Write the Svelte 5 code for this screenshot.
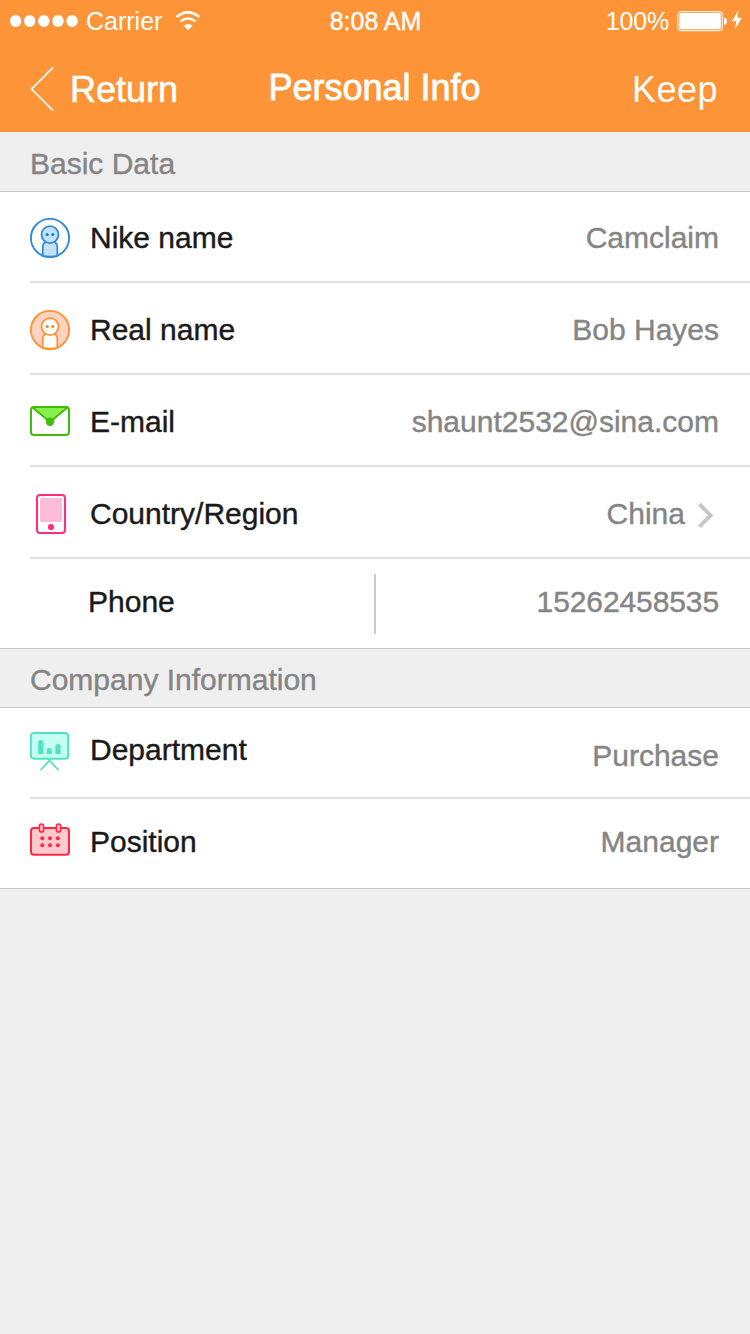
<script>
  const basic = [
    { icon: 'user-blue', label: 'Nike name', value: 'Camclaim' },
    { icon: 'user-orange', label: 'Real name', value: 'Bob Hayes' },
    { icon: 'mail', label: 'E-mail', value: 'shaunt2532@sina.com' },
    { icon: 'phone', label: 'Country/Region', value: 'China', more: true }
  ];
  const company = [
    { icon: 'board', label: 'Department', value: 'Purchase' },
    { icon: 'calendar', label: 'Position', value: 'Manager' }
  ];
</script>

{#snippet person(line, body, disc, eyes)}
  <circle cx="20" cy="20" r="19.1" fill={disc} stroke={line} stroke-width="1.9" />
  <path d="M12.800 38V29Q12.800 26 15.500 23.500H24.500Q27.300 26 27.300 29V38Q20 39.200 12.800 38Z" fill={body} stroke={line} stroke-width="1.8" />
  <circle cx="20" cy="16.600" r="8.500" fill={body} stroke={line} stroke-width="1.8" />
  <circle cx="17.200" cy="16.500" r="1.600" fill={eyes} />
  <circle cx="22.800" cy="16.500" r="1.600" fill={eyes} />
{/snippet}

{#snippet glyph(name)}
  <svg class="icon" width="40" height="40" viewBox="0 0 40 40">
    {#if name === 'user-blue'}
      {@render person('#338adb', '#c3e1ff', '#fff', '#0c86c4')}
    {:else if name === 'user-orange'}
      {@render person('#ff9335', '#fff', '#ffd3c1', '#ff8222')}
    {:else if name === 'mail'}
      <path d="M2 5H38L23 18.500Q20 21 17 18.500Z" fill="#87f04d" />
      <path d="M2.500 5.500L18 18.300Q20 19.800 22 18.300L37.500 5.500" fill="none" stroke="#42bd06" stroke-width="1.800" />
      <rect x="1" y="5" width="38" height="28" rx="3" fill="none" stroke="#42bd06" stroke-width="2" />
      <circle cx="20" cy="19.800" r="4.200" fill="#42bd06" />
    {:else if name === 'phone'}
      <rect x="7" y="1" width="28" height="38" rx="3" fill="#fff" stroke="#ff2d7b" stroke-width="2" />
      <rect x="10" y="4" width="22" height="24" rx="1.500" fill="#ffbbd7" />
      <circle cx="21" cy="33" r="3.100" fill="#ff2d7b" />
    {:else if name === 'board'}
      <path d="M18 27L28 37.500M21 27L11 37.500" stroke="#50e3c2" stroke-width="1.800" stroke-linecap="round" />
      <rect x=".9" y="1" width="37.200" height="25.800" rx="3" fill="#c4fff2" stroke="#50e3c2" stroke-width="1.900" />
      <path d="M8.200 22V10.500a2.600 2.600 0 0 1 5.200 0V22ZM16.800 22V18.600a2.500 2.500 0 0 1 5 0V22ZM25.400 22V14.500a2.600 2.600 0 0 1 5.200 0V22Z" fill="#50e3c2" />
    {:else}
      <rect x="1" y="5" width="38" height="26.800" rx="3" fill="#ffc9cd" stroke="#ff2946" stroke-width="2" />
      <rect x="9.400" y="1" width="4.200" height="8" rx="2.100" fill="#ffc9cd" stroke="#ff2946" stroke-width="1.700" />
      <rect x="26.400" y="1" width="4.200" height="8" rx="2.100" fill="#ffc9cd" stroke="#ff2946" stroke-width="1.700" />
      {#each [12.3, 20, 27.8] as x}
        {#each [15.3, 22.3] as y}
          <circle cx={x} cy={y} r="2" fill="#ff2946" />
        {/each}
      {/each}
    {/if}
  </svg>
{/snippet}

{#snippet row(item)}
  <div class="row">
    {@render glyph(item.icon)}
    <span class="label">{item.label}</span>
    <span class="value">{item.value}</span>
    {#if item.more}
      <svg class="more" width="18" height="28" viewBox="0 0 18 28">
        <path d="M2.400 3.200L13.600 14.400L2.400 25.600" fill="none" stroke="#c7c7cc" stroke-width="4" />
      </svg>
    {/if}
  </div>
{/snippet}

<main class="screen">
  <header>
    <div class="status">
      <div class="side">
        <svg width="70" height="14" viewBox="0 0 70 14">
          {#each [6.6, 20.7, 34.8, 49, 63.1] as x}
            <ellipse cx={x} cy="7" rx="5.700" ry="6" fill="#fff" />
          {/each}
        </svg>
        <span class="carrier">Carrier</span>
        <svg class="wifi" width="26" height="20" viewBox="0 0 26 20">
          <path d="M1.600 6Q13-3.200 24.400 6" fill="none" stroke="#fff" stroke-width="2.600" />
          <path d="M5.400 10.400Q13 4.400 20.600 10.400" fill="none" stroke="#fff" stroke-width="2.400" />
          <path d="M8.500 14.700Q13 11.200 17.500 14.700L13 19.300Z" fill="#fff" />
        </svg>
      </div>
      <span class="time">8:08 AM</span>
      <div class="side end">
        <span>100%</span>
        <svg width="66" height="24" viewBox="0 0 66 24">
          <rect x="1.700" y="2.700" width="44.600" height="19" rx="3" fill="none" stroke="#fff" stroke-opacity=".85" stroke-width="1.200" />
          <rect x="3.200" y="4.100" width="41.600" height="16.200" rx="1.800" fill="#fff" />
          <path d="M48 8.200Q51 9.300 51 12.200T48 16.200Z" fill="#fff" />
          <path d="M62.400 1.200L55.900 12.300H60.400L58.800 20.600L65.900 8.800H61.400Z" fill="#fff" />
        </svg>
      </div>
    </div>
    <nav>
      <div class="back">
        <svg width="26" height="46" viewBox="0 0 26 46">
          <path d="M23.200 1.400L1.600 23L23.200 44.600" fill="none" stroke="#fff" stroke-width="1.700" />
        </svg>
        <span>Return</span>
      </div>
      <h1>Personal Info</h1>
      <span class="keep">Keep</span>
    </nav>
  </header>

  <h2>Basic Data</h2>
  <section>
    {#each basic as item}
      {@render row(item)}
    {/each}
    <div class="split">
      <span class="label">Phone</span>
      <span class="value number">15262458535</span>
    </div>
  </section>

  <h2 class="lined">Company Information</h2>
  <section class="company">
    {#each company as item}
      {@render row(item)}
    {/each}
  </section>
</main>

<style>
  :global(body) {
    background: #efefef;
  }
  .screen {
    width: 750px;
    min-height: 1334px;
    background: #efefef;
    font-family: 'Liberation Sans', Arial, sans-serif;
    font-size: 30px;
    line-height: 40px;
    color: #1a1a1a;
    white-space: nowrap;
  }
  svg {
    display: block;
    flex: none;
  }
  header {
    box-sizing: border-box;
    height: 132px;
    background: #fd9437;
    color: #fff;
  }
  .status {
    display: grid;
    grid-template-columns: 1fr auto 1fr;
    height: 42px;
    padding: 0 8px 0 9px;
    font-size: 25px;
    line-height: 42px;
  }
  .side {
    display: flex;
    align-items: center;
  }
  .end {
    justify-content: flex-end;
    gap: 7px;
    letter-spacing: -0.2px;
  }
  .carrier {
    margin-left: 7px;
  }
  .wifi {
    margin-left: 13px;
  }
  .time {
    -webkit-text-stroke: 0.4px #fff;
  }
  nav {
    display: grid;
    grid-template-columns: 1fr auto 1fr;
    height: 90px;
    padding: 0 31px 0 30px;
    font-size: 36px;
    line-height: 44px;
  }
  .back {
    display: flex;
    align-items: flex-start;
    gap: 14px;
    padding-top: 24px;
  }
  .back span {
    padding-top: 2px;
    -webkit-text-stroke: 0.6px #fff;
  }
  h1 {
    margin: 0;
    padding-top: 24px;
    font-size: 36px;
    font-weight: 400;
    -webkit-text-stroke: 0.8px #fff;
  }
  .keep {
    padding-top: 26px;
    justify-self: end;
    margin-right: 1px;
    letter-spacing: 0.5px;
  }
  h2 {
    box-sizing: border-box;
    height: 60px;
    margin: 0;
    padding: 12px 30px 0;
    border-bottom: 1px solid #c8c8c8;
    font-size: 30px;
    font-weight: 400;
    color: #858585;
    -webkit-text-stroke: 0.4px #858585;
  }
  h2.lined {
    padding-top: 11px;
    border-top: 1px solid #c8c8c8;
  }
  section {
    background: #fff;
  }
  .row {
    box-sizing: border-box;
    display: flex;
    align-items: flex-start;
    height: 92px;
    margin-left: 30px;
    padding: 27px 31px 0 0;
    border-bottom: 2px solid #e2e2e2;
  }
  .row:first-child {
    height: 91px;
    padding-top: 26px;
  }
  .label {
    margin-left: 20px;
    -webkit-text-stroke: 0.4px #1a1a1a;
  }
  .value {
    margin-left: auto;
    color: #858585;
    -webkit-text-stroke: 0.4px #858585;
  }
  .more {
    margin: 7px 4px 0 12px;
  }
  .split {
    display: grid;
    grid-template-columns: 284px 1fr;
    height: 74px;
    padding: 15px 31px 0 68px;
  }
  .split .label {
    margin: 0 0 0 20px;
    padding-top: 8px;
  }
  .split .value {
    height: 52px;
    margin: 0 0 0 22px;
    padding-top: 8px;
    border-left: 2px solid #c8c8c8;
    text-align: right;
  }
  .number {
    letter-spacing: -0.1px;
  }
  .company {
    border-bottom: 1px solid #c8c8c8;
  }
  .company .row {
    height: 89px;
    padding-top: 24px;
    border-bottom: 0;
  }
  .company .row:first-child {
    height: 91px;
    border-bottom: 2px solid #e2e2e2;
  }
  .company .label {
    margin-top: -1px;
  }
  .company .row:first-child .label {
    margin-top: -2px;
  }
  .company .value {
    margin-top: -1px;
  }
  .company .row:first-child .value {
    margin-top: 4px;
  }
</style>
